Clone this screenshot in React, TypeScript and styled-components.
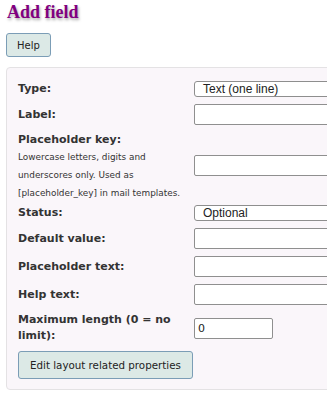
import React from "react";
import styled, { createGlobalStyle } from "styled-components";

const Global = createGlobalStyle`
  html, body { margin: 0; padding: 0; background: #ffffff; overflow: hidden; }
  body { font-family: "DejaVu Sans", Verdana, sans-serif; color: #333; }
`;

const Page = styled.div`
  padding: 0 0 0 6px;
  width: 360px;
`;

const Title = styled.h1`
  margin: 0;
  padding: 1px 0 0 1px;
  font-family: "Liberation Serif", "Times New Roman", serif;
  font-weight: bold;
  font-size: 18px;
  line-height: 22px;
  color: #800080;
  text-shadow: 1px 2px 3px rgba(0, 0, 0, 0.35);
`;

const Button = styled.button<{ $h: number }>`
  display: inline-flex;
  align-items: center;
  justify-content: center;
  box-sizing: border-box;
  height: ${(p) => p.$h}px;
  padding: 0 ${(p) => (p.$h > 26 ? 11 : 10)}px;
  background: #dce9e6;
  border: 1px solid #7b9db6;
  border-radius: 3px;
  font-family: "DejaVu Sans", Verdana, sans-serif;
  font-size: ${(p) => (p.$h > 26 ? 10.3 : 10)}px;
  color: #222;
  cursor: pointer;
`;

const HelpRow = styled.div`
  margin-top: 10px;
  display: flex;
`;

const Panel = styled.div`
  margin-top: 10px;
  box-sizing: border-box;
  width: 360px;
  background: #faf6fa;
  border: 1px solid #e4e2e4;
  border-radius: 4px;
  padding: 13px 11px 10px 11px;
`;

const Form = styled.div`
  display: grid;
  grid-template-columns: 176px 1fr;
  row-gap: 7px;
  align-items: center;
`;

const Label = styled.div`
  font-weight: bold;
  font-size: 11px;
  line-height: 16px;
  color: #333;
`;

const Hint = styled.div`
  font-weight: normal;
  font-size: 8.9px;
  line-height: 18px;
  margin-bottom: -4px;
  color: #333;
  white-space: nowrap;
`;

const Select = styled.div`
  box-sizing: border-box;
  height: 16px;
  width: 170px;
  border: 1px solid #8e8e8e;
  border-radius: 3px;
  background: #fff;
  padding-left: 8px;
  font-family: "Liberation Sans", Arial, sans-serif;
  font-size: 12px;
  line-height: 14px;
  color: #222;
`;

const Input = styled.input<{ $w?: number }>`
  box-sizing: border-box;
  height: 21px;
  width: ${(p) => p.$w ?? 170}px;
  border: 1px solid #8f8f8f;
  border-radius: 2px;
  background: #fff;
  padding: 0 3px;
  font-family: "DejaVu Sans", Verdana, sans-serif;
  font-size: 11px;
  color: #222;
  outline: none;
`;

const ButtonCell = styled.div`
  grid-column: 1 / span 2;
  display: flex;
`;

export default function App() {
  return (
    <Page>
      <Global />
      <Title>Add field</Title>
      <HelpRow>
        <Button $h={24}>Help</Button>
      </HelpRow>
      <Panel>
        <Form>
          <Label>Type:</Label>
          <Select>Text (one line)</Select>

          <Label>Label:</Label>
          <Input />

          <div>
            <Label>Placeholder key:</Label>
            <Hint>
              Lowercase letters, digits and
              <br />
              underscores only. Used as
              <br />
              [placeholder_key] in mail templates.
            </Hint>
          </div>
          <Input />

          <Label>Status:</Label>
          <Select>Optional</Select>

          <Label>Default value:</Label>
          <Input />

          <Label>Placeholder text:</Label>
          <Input />

          <Label>Help text:</Label>
          <Input />

          <Label>
            Maximum length (0 = no
            <br />
            limit):
          </Label>
          <Input $w={79} defaultValue="0" />

          <ButtonCell>
            <Button $h={28}>Edit layout related properties</Button>
          </ButtonCell>
        </Form>
      </Panel>
    </Page>
  );
}
